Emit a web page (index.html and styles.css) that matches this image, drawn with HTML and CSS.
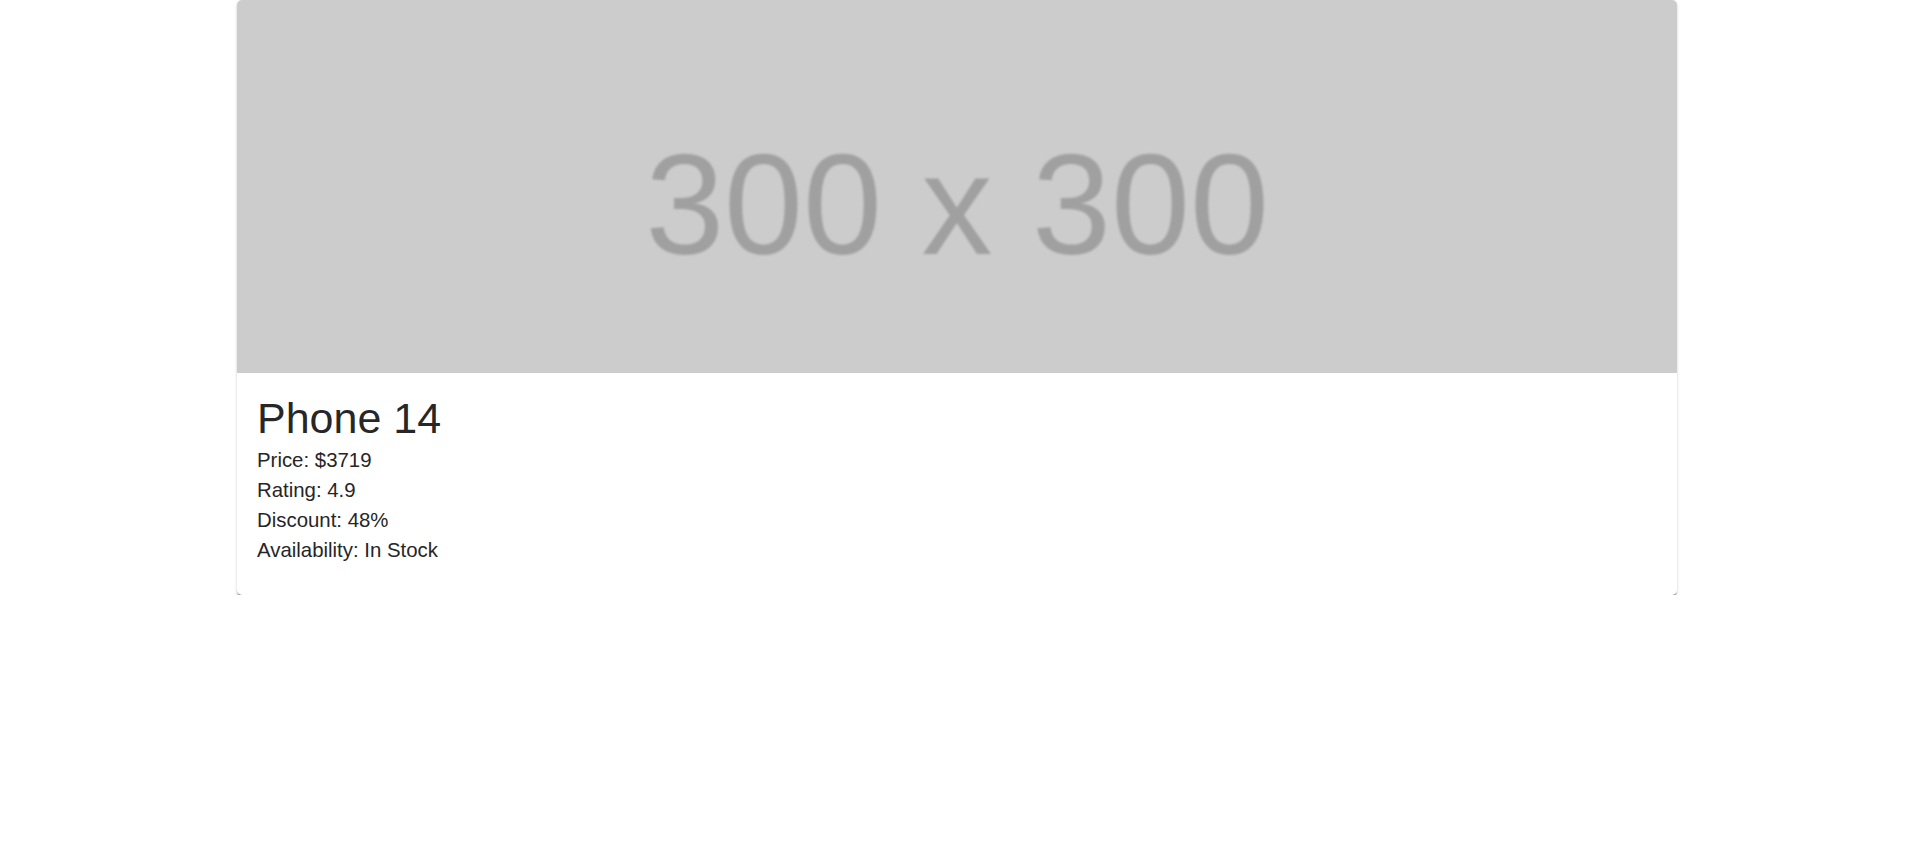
FILE: index.html
```html
<!DOCTYPE html>
<html lang="en">
<head>
<meta charset="utf-8">
<title>Phone 14</title>
<link rel="stylesheet" href="styles.css">
</head>
<body>
<main class="container">
  <article class="card">
    <div class="media"><span class="media-text">300 x 300</span></div>
    <div class="card-content">
      <h2 class="title">Phone 14</h2>
      <p class="line">Price: $3719</p>
      <p class="line">Rating: 4.9</p>
      <p class="line">Discount: 48%</p>
      <p class="line">Availability: In Stock</p>
    </div>
  </article>
</main>
</body>
</html>
```

FILE: styles.css
```css
html, body {
  margin: 0;
  padding: 0;
  background: #ffffff;
  font-family: "Liberation Sans", Arial, sans-serif;
}
.container {
  width: 1440px;
  margin: 0 auto;
  transform: translateX(-1px);
}
.card {
  background: #fff;
  border-radius: 5px;
  overflow: hidden;
  box-shadow: 0 2.5px 1.25px -1.25px rgba(0,0,0,0.25), 0 1.25px 1.25px 0 rgba(0,0,0,0.16), 0 1.25px 3.75px 0 rgba(0,0,0,0.12);
}
.media {
  height: 373px;
  background: #cccccc;
  display: flex;
  align-items: center;
  justify-content: center;
  padding-top: 36px;
  box-sizing: border-box;
  overflow: hidden;
}
.media-text {
  font-size: 142px;
  line-height: 1;
  color: #a0a0a0;
  filter: blur(1.2px);
  white-space: pre;
}
.card-content {
  padding: 19px 20px 30px 20px;
}
.title {
  margin: 0;
  font-weight: 400;
  font-size: 43px;
  line-height: 52.5px;
  color: rgba(0,0,0,0.87);
}
.line {
  margin: 0;
  font-size: 20.4px;
  line-height: 30px;
  color: #262626;
}
```
